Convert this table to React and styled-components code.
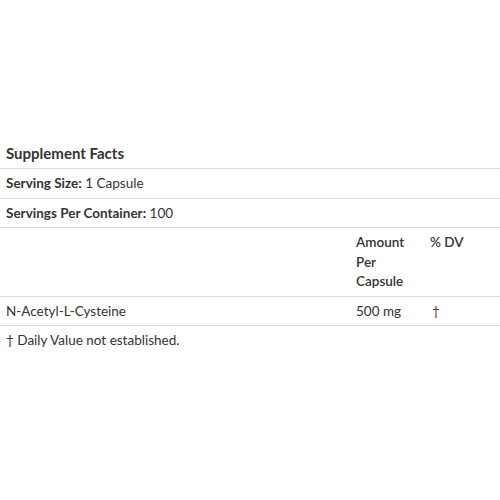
import React from 'react';
import styled, { createGlobalStyle } from 'styled-components';

const GlobalStyle = createGlobalStyle`
  body {
    margin: 0;
    background: #fff;
    font-family: Lato, "Open Sans", sans-serif;
    color: #333;
  }
`;

const Page = styled.div`
  padding-top: 139px;
  width: 500px;
`;

const Facts = styled.table`
  width: 100%;
  border-collapse: collapse;
  font-size: 13.5px;
  line-height: 19.5px;
`;

const Caption = styled.caption`
  text-align: left;
  font-size: 15px;
  font-weight: 700;
  padding: 5px 6px;
  line-height: 19px;
  border-bottom: 1px solid #dcdcdc;
`;

const Row = styled.tr`
  border-bottom: ${p => (p.$last ? 'none' : '1px solid #dcdcdc')};
`;

const Cell = styled.td`
  padding: 5px 6px 4px;
  vertical-align: top;
  text-align: left;
  width: ${p => p.$w || 'auto'};
  font-weight: ${p => (p.$head ? 600 : 400)};
`;

const Label = styled.strong`
  font-weight: 700;
`;

const Dagger = styled.span`
  color: #7a1f2b;
  padding-left: 2px;
`;

export default function App() {
  return (
    <Page>
      <GlobalStyle />
      <Facts>
        <Caption>Supplement Facts</Caption>
        <tbody>
          <Row>
            <Cell colSpan={3}><Label>Serving Size:</Label> 1 Capsule</Cell>
          </Row>
          <Row>
            <Cell colSpan={3}><Label>Servings Per Container:</Label> 100</Cell>
          </Row>
          <Row>
            <Cell $w="338px"></Cell>
            <Cell $w="62px" $head>Amount Per Capsule</Cell>
            <Cell $head>% DV</Cell>
          </Row>
          <Row>
            <Cell>N-Acetyl-L-Cysteine</Cell>
            <Cell>500 mg</Cell>
            <Cell><Dagger>†</Dagger></Cell>
          </Row>
          <Row $last>
            <Cell colSpan={3}>† Daily Value not established.</Cell>
          </Row>
        </tbody>
      </Facts>
    </Page>
  );
}
